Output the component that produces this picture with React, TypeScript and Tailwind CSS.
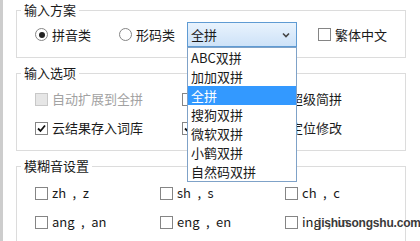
import React from 'react';

const FONT = { fontFamily: '"Noto Sans CJK SC", "Liberation Sans", sans-serif' };

const Check = ({ checked = false, disabled = false }: { checked?: boolean; disabled?: boolean }) => (
    <span
        className={`w-[13px] h-[13px] shrink-0 border flex items-center justify-center ${
            disabled ? 'bg-[#e6e6e6] border-[#c8c8c8]' : 'bg-white border-[#858585]'
        }`}
    >
        {checked && (
            <svg width="9" height="9" viewBox="0 0 9 9">
                <path d="M1 4.5 L3.5 7 L8 1.5" stroke="#111" strokeWidth="1.8" fill="none" />
            </svg>
        )}
    </span>
);

const Radio = ({ checked = false }: { checked?: boolean }) => (
    <span className="w-[13px] h-[13px] shrink-0 rounded-full border border-[#858585] bg-white flex items-center justify-center">
        {checked && <span className="w-[6px] h-[6px] rounded-full bg-[#222]" />}
    </span>
);

const Option = ({ label, checked, disabled }: { label: string; checked?: boolean; disabled?: boolean }) => (
    <div className="flex items-center gap-[4px] h-[20px] leading-[20px]">
        <Check checked={checked} disabled={disabled} />
        <span className={`whitespace-nowrap ${disabled ? 'text-[#a2a2a2]' : 'text-[#1a1a1a]'}`}>{label}</span>
    </div>
);

const SCHEMES = ['ABC双拼', '加加双拼', '全拼', '搜狗双拼', '微软双拼', '小鹤双拼', '自然码双拼'];

const Group = ({ title, children }: { title: string; children: React.ReactNode }) => (
    <fieldset className="border border-[#dcdcdc] mr-[14px]">
        <legend className="ml-[4px] px-[3px] leading-[18px] text-[#1a1a1a]">{title}</legend>
        {children}
    </fieldset>
);

// fuzzy pinyin pairs, en-space around the comma
const FUZZY = ['zh\u2002,\u2002z', 'sh\u2002,\u2002s', 'ch\u2002,\u2002c', 'ang\u2002,\u2002an', 'eng\u2002,\u2002en', 'ing\u2002,\u2002in'];

export default function App() {
    return (
        <div className="w-[420px] h-[241px] bg-white relative overflow-hidden flex text-[13px]" style={FONT}>
            <div className="w-[3px] bg-[#cdcdcd] shrink-0" />
            <div className="flex-1 pl-[13px] pt-[1px] flex flex-col gap-[6px]">
                <Group title="输入方案">
                    <div className="flex items-center pl-[18px] pt-[3px] pb-[10px] h-[25px] box-content leading-[20px]">
                        <label className="w-[84px] flex items-center gap-[4px]">
                            <Radio checked />
                            <span className="text-[#1a1a1a]">拼音类</span>
                        </label>
                        <label className="w-[68px] flex items-center gap-[4px]">
                            <Radio />
                            <span className="text-[#1a1a1a]">形码类</span>
                        </label>
                        <div className="relative w-[110px] h-[25px]">
                            <div className="h-full border border-[#5f9bd3] bg-gradient-to-b from-[#e9f3fd] to-[#cde2f8] flex items-center pl-[3px] pr-[6px]">
                                <span className="flex-1 text-[#1a1a1a]">全拼</span>
                                <svg width="8" height="6" viewBox="0 0 8 6">
                                    <path d="M1 1.5 L4 4.5 L7 1.5" stroke="#444" strokeWidth="1.6" fill="none" />
                                </svg>
                            </div>
                            <div className="absolute left-0 top-[25px] w-[110px] bg-white border border-[#7fa2c8] z-10">
                                {SCHEMES.map(s => (
                                    <div
                                        key={s}
                                        className={`h-[19px] leading-[19px] pl-[3px] ${s === '全拼' ? 'bg-[#3399ff] text-white' : 'text-[#1a1a1a]'}`}
                                    >
                                        {s}
                                    </div>
                                ))}
                            </div>
                        </div>
                        <div className="ml-[21px] flex items-center gap-[4px]">
                            <Check />
                            <span className="text-[#1a1a1a]">繁体中文</span>
                        </div>
                    </div>
                </Group>

                <Group title="输入选项">
                    <div className="grid grid-cols-[147px_1fr] gap-y-[9px] pl-[18px] pt-[7px] pb-[12px]">
                        <Option label="自动扩展到全拼" disabled />
                        <Option label="输入简拼时启用超级简拼" />
                        <Option label="云结果存入词库" checked />
                        <Option label="光标移动时自动定位修改" checked />
                    </div>
                </Group>

                <Group title="模糊音设置">
                    <div className="grid grid-cols-[125px_125px_1fr] gap-y-[9px] pl-[18px] pt-[8px] pb-[12px]">
                        {FUZZY.map(f => <Option key={f} label={f} />)}
                    </div>
                </Group>
            </div>
            <div
                className="absolute left-[318px] top-[214px] text-[12px] font-semibold text-[#3a3a3a] tracking-[-0.2px]"
                style={{ fontFamily: '"Liberation Sans", sans-serif', textShadow: '0 0 2px #fff' }}
            >
                jishusongshu.com
            </div>
        </div>
    );
}
